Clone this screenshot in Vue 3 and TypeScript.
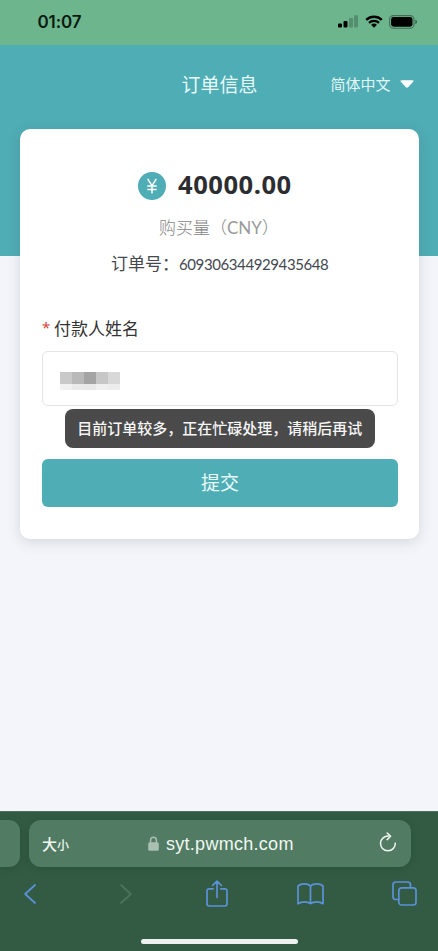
<script setup lang="ts">
import { ref } from 'vue'

interface MosaicCell {
  id: number
  top: string
  bottom: string
}

const amount = ref<string>('40000.00')
const orderNo = ref<string>('609306344929435648')
const toast = ref<string>('目前订单较多，正在忙碌处理，请稍后再试')

const mosaic: MosaicCell[] = [
  { id: 1, top: '#c9c9c9', bottom: '#f1f1f1' },
  { id: 2, top: '#b9b9b9', bottom: '#eaeaea' },
  { id: 3, top: '#a4a4a4', bottom: '#e9e9e9' },
  { id: 4, top: '#c7c7c7', bottom: '#f0f0f0' },
  { id: 5, top: '#d8d8d8', bottom: '#ededed' },
]
</script>

<template>
  <div class="screen">
    <div class="status">
      <span class="clock">01:07</span>
      <div class="indicators">
        <svg class="signal" width="20" height="13" viewBox="0 0 20 13">
          <rect x="0" y="8.4" width="4" height="4.2" rx="1" />
          <rect x="5.5" y="6" width="4" height="6.6" rx="1" />
          <rect x="11" y="3" width="4" height="9.6" rx="1" opacity=".22" />
          <rect x="16" y="0.2" width="4" height="12.4" rx="1" opacity=".22" />
        </svg>
        <svg class="wifi" width="18" height="13" viewBox="0 0 18 13">
          <path d="M1.2 4.9a11.2 11.2 0 0 1 15.6 0M4 7.9a7.2 7.2 0 0 1 10 0" fill="none" stroke="#000" stroke-width="2.3" />
          <path d="M9 12.7 6.1 9.8a4.2 4.2 0 0 1 5.8 0z" />
        </svg>
        <svg class="battery" width="29" height="14" viewBox="0 0 29 14">
          <rect x="0.6" y="0.6" width="24.4" height="12.6" rx="3.8" fill="none" stroke="#000" stroke-opacity=".4" stroke-width="1.1" />
          <rect x="2.1" y="2.1" width="21.4" height="9.6" rx="2.4" />
          <path d="M26.3 4.6c2.3.8 2.3 3.8 0 4.6z" opacity=".45" />
        </svg>
      </div>
    </div>

    <main class="page">
      <header class="header">
        <h1 class="title">订单信息</h1>
        <div class="lang">
          <span>简体中文</span>
          <svg width="14" height="8" viewBox="0 0 14 8">
            <path d="M1.4.3h11.2c1 0 1.3.9.6 1.5L8.1 7.2c-.6.6-1.6.6-2.2 0L.8 1.8C.1 1.2.4.3 1.4.3z" fill="#fff" />
          </svg>
        </div>
      </header>

      <section class="card">
        <div class="amount-row">
          <svg width="28" height="28" viewBox="0 0 28 28">
            <circle cx="14" cy="14" r="14" fill="#4fadb5" />
            <path d="M9.7 7 14 13.6 18.3 7M14 13.6V21.6M9.3 14h9.4M9.3 17.6h9.4" fill="none" stroke="#fff" stroke-width="1.5" />
          </svg>
          <span class="amount">{{ amount }}</span>
        </div>
        <p class="caption">购买量（<span>CNY</span>）</p>
        <p class="order"><span>订单号：</span><span class="order-no">{{ orderNo }}</span></p>

        <div class="label"><span class="star">*</span><span>付款人姓名</span></div>
        <div class="field">
          <div class="mosaic">
            <div v-for="cell in mosaic" :key="cell.id" class="cell">
              <i class="cell-top" :style="{ background: cell.top }"></i>
              <i class="cell-bottom" :style="{ background: cell.bottom }"></i>
            </div>
          </div>
        </div>
        <button class="submit" type="button">提交</button>
        <div class="toast">{{ toast }}</div>
      </section>
    </main>

    <footer class="browser">
      <div class="tabs">
        <div class="prev-tab"></div>
        <div class="address">
          <span class="text-size">大<small>小</small></span>
          <div class="url">
            <svg width="11" height="15" viewBox="0 0 11 15">
              <path d="M2.6 7V4.1a2.9 2.9 0 0 1 5.8 0V7" fill="none" stroke="#aabfb1" stroke-width="1.5" />
              <rect x="0.2" y="6.3" width="10.6" height="8.4" rx="1.5" fill="#aabfb1" />
            </svg>
            <span>syt.pwmch.com</span>
          </div>
          <svg class="reload" width="18" height="20" viewBox="0 0 18 20">
            <path d="M9.7 4.1A7.4 7.4 0 1 0 16.3 11.2" fill="none" stroke="#f0f7f1" stroke-width="1.5" stroke-linecap="round" />
            <path d="M8.2 1 11.6 4.3 8.2 7.6" fill="none" stroke="#f0f7f1" stroke-width="1.5" stroke-linecap="round" stroke-linejoin="round" />
          </svg>
        </div>
      </div>

      <nav class="tools">
        <svg width="12" height="20" viewBox="0 0 12 20"><path d="M11 1 1.2 10 11 19" stroke-width="1.8" /></svg>
        <svg class="disabled" width="12" height="20" viewBox="0 0 12 20"><path d="M1 1 10.8 10 1 19" stroke-width="1.7" /></svg>
        <svg width="22" height="27" viewBox="0 0 22 27">
          <path d="M7.2 8.8H3.2A2.2 2.2 0 0 0 1 11v12.8A2.2 2.2 0 0 0 3.2 26h15.6a2.2 2.2 0 0 0 2.2-2.2V11a2.2 2.2 0 0 0-2.2-2.2h-4M11 17.5V1.3M6.6 5.5 11 1.1l4.4 4.4" />
        </svg>
        <svg width="27" height="22" viewBox="0 0 27 22">
          <path d="M13.5 3.2C11.2.3 4.2.1 1 3v17.7c3.4-2.4 9.5-2.4 12.5 0V3.2C15.8.3 22.8.1 26 3v17.7c-3.4-2.4-9.5-2.4-12.5 0" />
        </svg>
        <svg width="25" height="25" viewBox="0 0 25 25">
          <path d="M6.5 18.5H3.7A2.7 2.7 0 0 1 1 15.8V3.7A2.7 2.7 0 0 1 3.7 1h12.1a2.7 2.7 0 0 1 2.7 2.7v2.8" />
          <rect x="6.8" y="6.8" width="17.2" height="17.2" rx="2.7" />
        </svg>
      </nav>
      <div class="home"></div>
    </footer>
  </div>
</template>

<style>
body {
  margin: 0;
  overflow: hidden;
}
</style>

<style scoped>
.screen {
  width: 438px;
  height: 951px;
  display: flex;
  flex-direction: column;
  overflow: hidden;
  font-family: "Noto Sans CJK SC", sans-serif;
}
.screen * {
  box-sizing: border-box;
}
svg {
  display: block;
  flex: none;
}
.status {
  height: 45px;
  flex: none;
  background: #6db68d;
  display: flex;
  justify-content: space-between;
  padding: 0 20px 0 37.5px;
}
.clock {
  font: 600 17px/45px Inter, sans-serif;
  letter-spacing: -0.1px;
  color: #0b1a11;
}
.indicators {
  display: flex;
  align-items: flex-start;
  padding-top: 15px;
}
.signal {
  margin: 0 7px 0 0;
}
.wifi {
  margin: 0 6px 0 0;
}
.page {
  height: 766px;
  flex: none;
  background: linear-gradient(#4fadb5 211px, #f4f5fa 211px);
}
.header {
  height: 84px;
  display: grid;
  grid-template-columns: 1fr auto 1fr;
  align-items: center;
  padding: 0 24.5px 6px 25.5px;
}
.title {
  grid-column: 2;
  margin: 0;
  font-size: 19px;
  font-weight: 400;
  line-height: 28px;
  color: #e9fbfc;
}
.lang {
  grid-column: 3;
  display: flex;
  align-items: center;
  justify-content: flex-end;
  gap: 9px;
  font-size: 15px;
  line-height: 22px;
  color: #e0f6f7;
}
.card {
  position: relative;
  width: 399px;
  height: 410px;
  margin: 0 0 0 20px;
  padding: 43px 21px 0 22px;
  border-radius: 10px;
  background: #fff;
  box-shadow: 0 3px 14px rgba(60, 65, 80, 0.16);
}
.amount-row {
  display: flex;
  align-items: center;
  height: 28px;
  padding-left: 96px;
  gap: 12px;
}
.amount {
  padding-bottom: 2px;
  font: 700 25.6px/28px "Noto Sans", sans-serif;
  letter-spacing: 0.5px;
  color: #2c2d31;
}
.caption {
  margin: 14px 0 0 117px;
  font-size: 17px;
  line-height: 26px;
  font-weight: 300;
  color: #858585;
}
.caption span {
  font-family: Lato, sans-serif;
  font-weight: 400;
  color: #999;
}
.order {
  margin: 9px 0 0 69px;
  display: flex;
  align-items: baseline;
  font-size: 17px;
  line-height: 25px;
  color: #44484f;
}
.order-no {
  font-family: Lato, sans-serif;
  font-size: 15px;
  letter-spacing: -0.4px;
}
.label {
  display: flex;
  gap: 5px;
  margin-top: 38px;
  font-size: 17px;
  line-height: 25px;
  color: #333;
}
.star {
  width: 7px;
  color: #d9463b;
  font-family: "Noto Sans", sans-serif;
  font-size: 15px;
}
.field {
  margin-top: 11px;
  height: 55px;
  border: 1px solid #e4e4e6;
  border-radius: 6px;
  padding: 20px 17px;
}
.mosaic {
  display: flex;
}
.cell {
  width: 12px;
}
.cell-top {
  display: block;
  height: 12px;
}
.cell-bottom {
  display: block;
  height: 6px;
}
.submit {
  display: block;
  width: 100%;
  height: 48px;
  margin-top: 53px;
  padding: 0 0 2px;
  border: 0;
  border-radius: 6px;
  background: #4fadb5;
  color: #e9fbfc;
  font: 400 19px/46px "Noto Sans CJK SC", sans-serif;
}
.toast {
  position: absolute;
  left: 45px;
  top: 280px;
  width: 309.5px;
  height: 38.5px;
  border-radius: 8px;
  background: #4a4a4a;
  color: #f6f6f6;
  font-size: 15px;
  font-weight: 500;
  line-height: 38px;
  text-align: center;
  white-space: nowrap;
}
.browser {
  flex: 1;
  overflow: hidden;
  background: #335b43;
  border-top: 1px solid #4b715b;
  padding-top: 8px;
}
.tabs {
  display: flex;
  gap: 9px;
}
.prev-tab {
  width: 20px;
  height: 47px;
  border-radius: 0 11px 11px 0;
  background: #527b64;
  box-shadow: 0 2px 10px rgba(0, 40, 15, 0.18);
}
.address {
  width: 382px;
  height: 47px;
  display: flex;
  align-items: center;
  padding: 0 14px 0 13px;
  border-radius: 12px;
  background: #527b64;
  box-shadow: 0 2px 10px rgba(0, 40, 15, 0.18);
  color: #f0f7f1;
}
.text-size {
  font-size: 15px;
  font-weight: 500;
  width: 106px;
}
.text-size small {
  font-size: 12px;
}
.url {
  flex: 1;
  display: flex;
  align-items: center;
  gap: 7px;
  font: 400 18px/24px "Liberation Sans", sans-serif;
  letter-spacing: 0.28px;
}
.reload {
  margin-top: -3px;
}
.tools {
  display: grid;
  grid-template-columns: repeat(5, 93.5px);
  justify-items: center;
  align-items: center;
  height: 27px;
  margin: 13px 0 0 -16.5px;
}
.tools svg {
  fill: none;
  stroke: #5b91d8;
  stroke-width: 1.7;
  stroke-linejoin: round;
  stroke-linecap: round;
}
.tools svg.disabled {
  margin-left: 4px;
  stroke: #4d735a;
}
.home {
  width: 157px;
  height: 5px;
  margin: 32px auto 0;
  border-radius: 3px;
  background: #eef1ef;
}
</style>
